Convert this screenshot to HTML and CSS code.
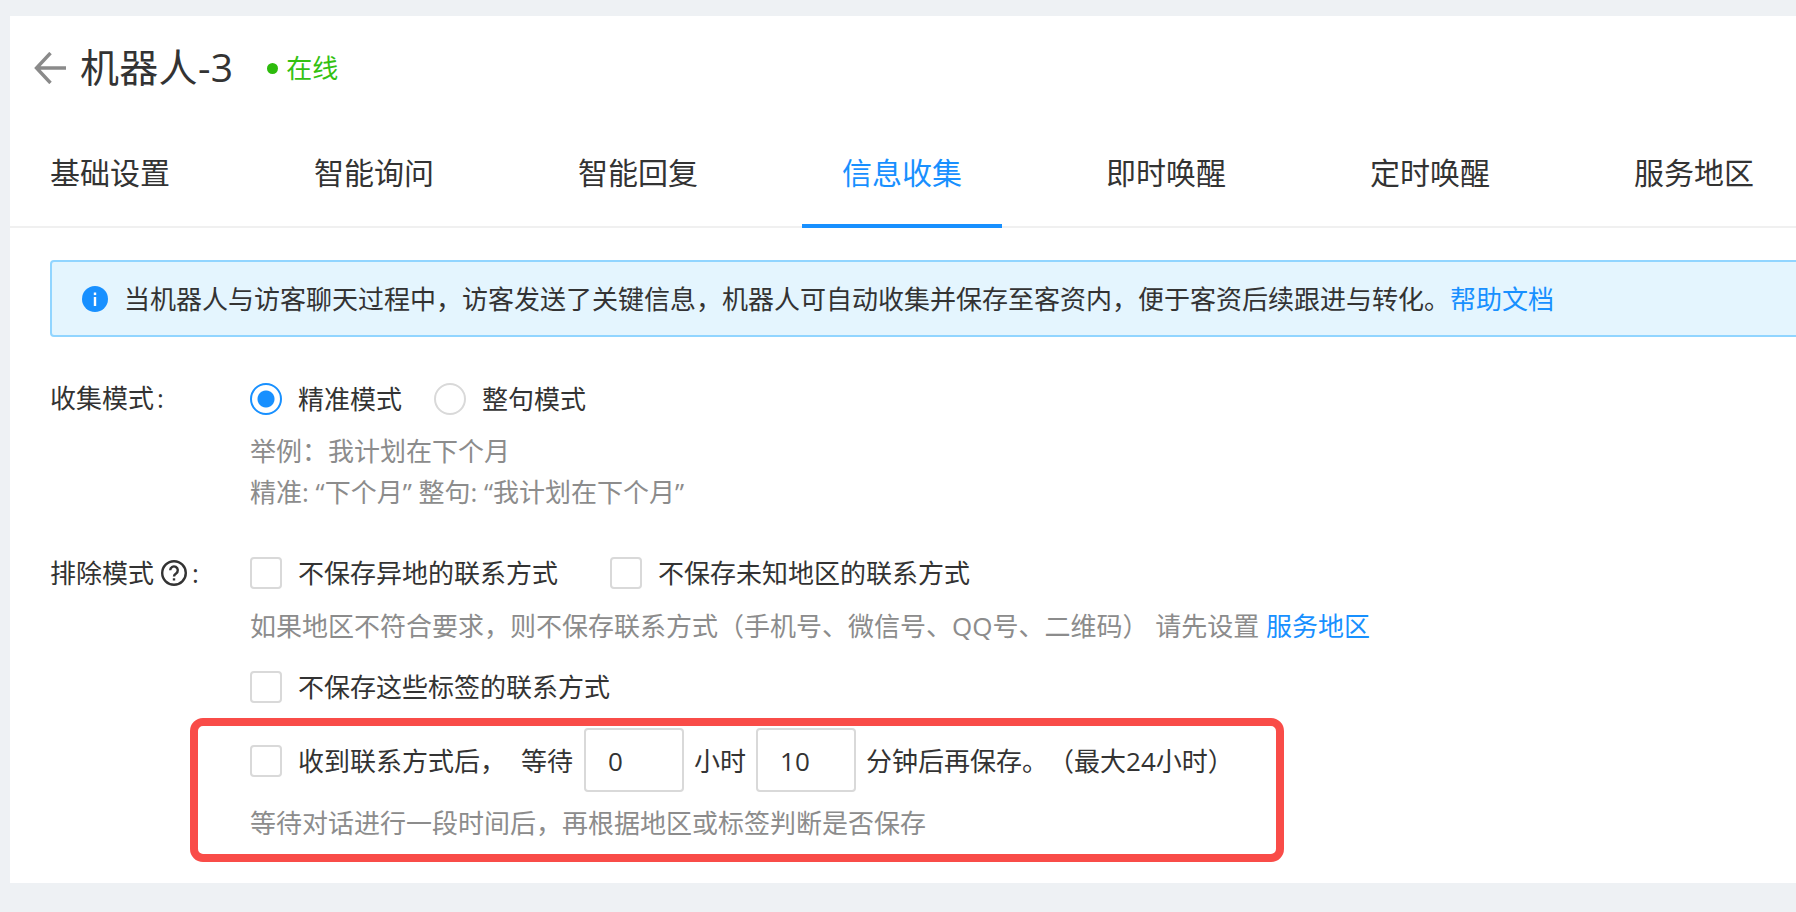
FILE: index.html
```html
<!DOCTYPE html>
<html lang="zh-CN">
<head>
    <meta charset="UTF-8">
    <title>机器人-3</title>
    <link rel="stylesheet" href="styles.css">
</head>
<body>
    <div class="card">
        <div class="header">
            <svg class="back" width="32" height="32" viewBox="0 0 32 32" fill="none" stroke="#8a8a8a" stroke-width="3.4">
                <path d="M32 16H3M16.500 1 2.500 16l14 15"/>
            </svg>
            <span class="title">机器人-3</span>
            <span class="status"><i class="dot"></i>在线</span>
        </div>

        <div class="tabs">
            <a class="tab">基础设置</a>
            <a class="tab">智能询问</a>
            <a class="tab">智能回复</a>
            <a class="tab active">信息收集</a>
            <a class="tab">即时唤醒</a>
            <a class="tab">定时唤醒</a>
            <a class="tab">服务地区</a>
        </div>

        <div class="content">
            <div class="alert">
                <svg class="info" width="26" height="26" viewBox="0 0 26 26">
                    <circle cx="13" cy="13" r="13" fill="#1890ff"/>
                    <rect x="11.800" y="11" width="2.400" height="9" fill="#fff"/>
                    <rect x="11.800" y="6.500" width="2.400" height="2.600" fill="#fff"/>
                </svg>
                <span>当机器人与访客聊天过程中，访客发送了关键信息，机器人可自动收集并保存至客资内，便于客资后续跟进与转化。</span><a class="link">帮助文档</a>
            </div>

            <div class="form-row first">
                <div class="label">收集模式<span class="colon-plain">:</span></div>
                <div class="field">
                    <div class="options">
                        <label class="option"><input type="radio" name="mode" checked>精准模式</label>
                        <label class="option"><input type="radio" name="mode">整句模式</label>
                    </div>
                    <p class="hint example">举例：我计划在下个月</p>
                    <p class="hint">精准: “下个月” 整句: “我计划在下个月”</p>
                </div>
            </div>

            <div class="form-row second">
                <div class="label">排除模式
                    <svg class="help" width="26" height="26" viewBox="0 0 26 26" fill="none" stroke="#333" stroke-width="2.400">
                        <circle cx="13" cy="13" r="11.800"/>
                        <path d="M9.200 10.200a3.800 3.800 0 1 1 5.900 3.200c-1.400.9-2.100 1.500-2.100 3.100"/>
                        <path d="M13 18.300v2.200"/>
                    </svg><span class="colon">:</span>
                </div>
                <div class="field">
                    <div class="options wide">
                        <label class="option"><input type="checkbox">不保存异地的联系方式</label>
                        <label class="option"><input type="checkbox">不保存未知地区的联系方式</label>
                    </div>
                    <p class="hint region">如果地区不符合要求，则不保存联系方式（手机号、微信号、QQ号、二维码） 请先设置 <a class="link">服务地区</a></p>
                    <div class="options tags">
                        <label class="option"><input type="checkbox">不保存这些标签的联系方式</label>
                    </div>
                    <div class="wait">
                        <label class="option"><input type="checkbox">收到联系方式后，</label>
                        <span class="wait-text first-text">等待</span>
                        <input class="num" type="text" value="0">
                        <span class="wait-text">小时</span>
                        <input class="num" type="text" value="10">
                        <span class="wait-text">分钟后再保存。（最大24小时）</span>
                    </div>
                    <p class="hint wait-hint">等待对话进行一段时间后，再根据地区或标签判断是否保存</p>
                </div>
            </div>
        </div>

        <!-- 红框标注 -->
        <div class="mark"></div>
    </div>
</body>
</html>
```

FILE: styles.css
```css
* {
    box-sizing: border-box;
}

html, body {
    height: 100%;
}

body {
    margin: 0;
    padding: 16px 0 29px 10px;
    background: #eef1f4;
    color: #333;
    font-family: "Open Sans", "Noto Sans CJK SC", sans-serif;
    font-size: 26px;
    line-height: 40px;
    overflow: hidden;
    text-spacing-trim: space-all;
}

.card {
    position: relative;
    height: 100%;
    background: #fff;
    overflow: hidden;
}

/* 顶部标题 */
.header {
    display: flex;
    align-items: center;
    height: 106px;
    padding-left: 24px;
}

.back {
    margin-bottom: 3px;
}

.title {
    margin: 0 0 4px 14px;
    font-size: 39px;
    line-height: 50px;
    letter-spacing: 0.3px;
}

.status {
    display: flex;
    align-items: center;
    margin: 0 0 2px 34px;
    color: #33c111;
}

.dot {
    width: 11px;
    height: 11px;
    margin-right: 8px;
    border-radius: 50%;
    background: #2dbb0c;
}

/* 标签页 */
.tabs {
    display: flex;
    gap: 64px;
    border-bottom: 2px solid #f0f0f0;
    white-space: nowrap;
}

.tab {
    flex: none;
    width: 200px;
    margin-bottom: -2px;
    font-size: 30px;
    line-height: 102px;
    text-align: center;
    border-bottom: 4px solid transparent;
}

.tab.active {
    color: #1890ff;
    border-bottom-color: #1890ff;
}

.content {
    padding: 32px 0 0 40px;
}

.alert {
    display: flex;
    align-items: center;
    height: 77px;
    margin-right: -20px;
    padding-left: 30px;
    background: #e4f5fe;
    border: 2px solid #91d5ff;
    border-radius: 4px;
    white-space: nowrap;
}

.info {
    flex: none;
    margin-right: 16px;
}

.link {
    color: #1890ff;
}

/* 表单 */
.form-row {
    display: grid;
    grid-template-columns: 200px 1fr;
}

.form-row.first {
    margin-top: 42px;
}

.form-row.first .label {
    margin-top: -1px;
}

.form-row.second {
    margin-top: 41px;
}

.label {
    display: flex;
    align-items: center;
    height: 40px;
}

.help {
    flex: none;
    margin-left: 7px;
}

.colon {
    margin-left: 5px;
}

.colon-plain {
    margin-left: 3px;
}

.options {
    display: flex;
    gap: 32px;
    height: 40px;
}

.options.wide {
    gap: 52px;
}

.option {
    display: flex;
    align-items: center;
    white-space: nowrap;
}

.option input {
    flex: none;
    width: 32px;
    height: 32px;
    margin: 0 16px 0 0;
    appearance: none;
    background: #fff;
    border: 2px solid #d9d9d9;
}

.option input[type="checkbox"] {
    border-radius: 4px;
}

.option input[type="radio"] {
    border-radius: 50%;
}

.option input[type="radio"]:checked {
    border-color: #1890ff;
    background: radial-gradient(circle, #1890ff 8px, #fff 9px);
}

.hint {
    margin: 0;
    color: #8c8c8c;
    white-space: nowrap;
}

.hint.example {
    margin-top: 12px;
    margin-bottom: 1px;
}

.hint.region {
    margin-top: 13px;
}

.options.tags {
    margin-top: 21px;
}

.wait {
    display: flex;
    align-items: center;
    height: 64px;
    margin-top: 21px;
}

.wait .option {
    margin-top: 2px;
}

.wait-text {
    margin: 2px 10px 0;
    white-space: nowrap;
}

.wait-text.first-text {
    margin-left: 15px;
    margin-right: 11px;
}

.num {
    width: 100px;
    height: 64px;
    padding: 2px 22px 0;
    border: 2px solid #d9d9d9;
    border-radius: 4px;
    color: #333;
    font: inherit;
}

.hint.wait-hint {
    margin-top: 11px;
}

/* 标注框，盖在内容上 */
.mark {
    position: absolute;
    left: 180px;
    top: 702px;
    width: 1094px;
    height: 144px;
    border: 8px solid #f94c48;
    border-radius: 13px;
    pointer-events: none;
}
```
